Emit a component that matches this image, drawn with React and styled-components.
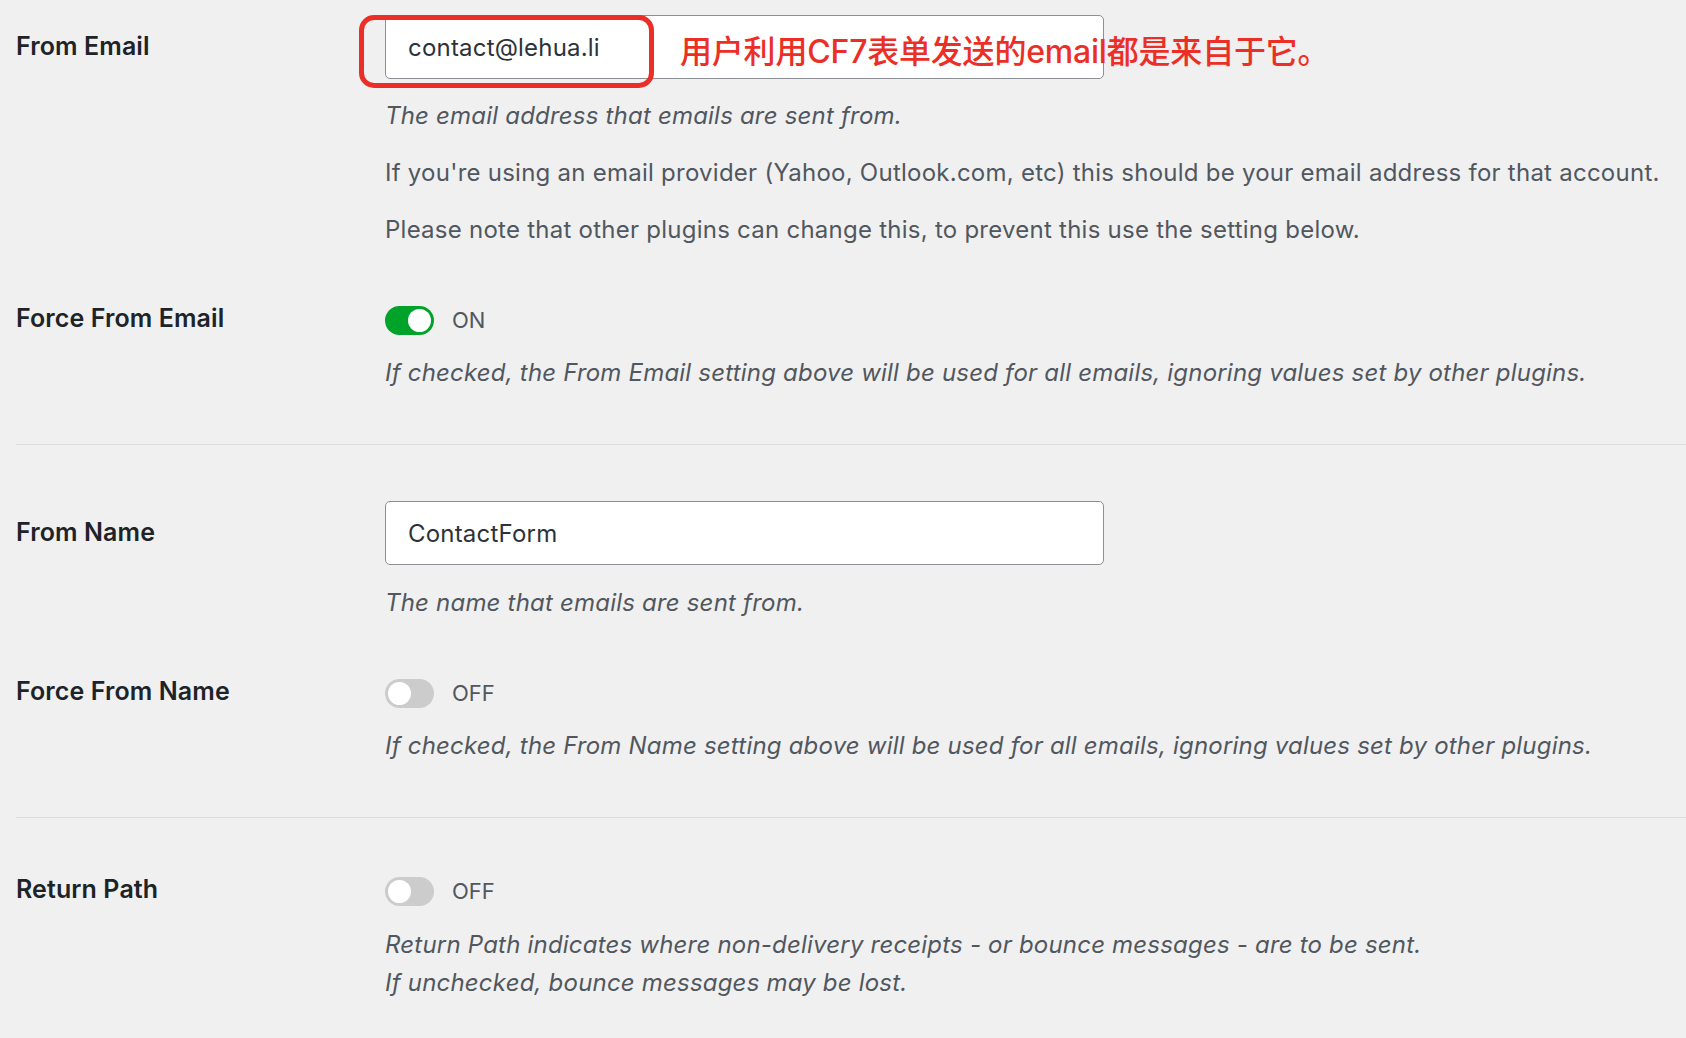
import styled, { createGlobalStyle } from "styled-components";

const GlobalStyle = createGlobalStyle`
  html, body {
    margin: 0;
    padding: 0;
    background: #f0f0f1;
  }
  body {
    font-family: Inter, "Noto Sans", "Noto Sans CJK SC", sans-serif;
    color: #1d2327;
  }
`

const Page = styled.div`
  min-height: 100vh;
  padding-left: 16px;
  background: #f0f0f1;
  overflow: hidden;
`
const Section = styled.section`
  display: flex;
  flex-direction: column;
  gap: 55px;
  padding: ${p => p.$top || 56}px 0 53px;
  border-top: ${p => (p.$first ? "none" : "1px solid #dcdcde")};
`
const Row = styled.div`
  display: grid;
  grid-template-columns: 369px 1fr;
  align-items: start;
`
const Label = styled.div`
  padding-top: ${p => (p.$toggle ? "3px" : "19px")};
  font-size: 25px;
  line-height: 24px;
  font-weight: 600;
  letter-spacing: 0.1px;
  color: #1d2327;
`
const Field = styled.div`
  display: flex;
  flex-direction: column;
  padding-top: ${p => (p.$toggle ? "3px" : "0")};
`
const InputWrap = styled.div`
  position: relative;
  width: 719px;
`
const TextInput = styled.input`
  box-sizing: border-box;
  display: block;
  width: 719px;
  height: 64px;
  padding: 0 22px;
  border: 1px solid #8c8f94;
  border-radius: 5px;
  background: #fff;
  font-family: Inter, "Noto Sans", sans-serif;
  font-size: 24px;
  letter-spacing: 0.2px;
  color: #2c3338;
  outline: none;
`
const Highlight = styled.span`
  position: absolute;
  left: -26px;
  top: 0;
  width: 295px;
  height: 73px;
  box-sizing: border-box;
  border: 5px solid #ec2f26;
  border-radius: 15px;
  pointer-events: none;
`
const Note = styled.span`
  position: absolute;
  left: 295px;
  top: 21px;
  font-family: Inter, "Noto Sans CJK SC", sans-serif;
  font-size: 32px;
  line-height: 32px;
  font-weight: 500;
  letter-spacing: -0.2px;
  color: #ec2f26;
  white-space: nowrap;
`
const Desc = styled.p`
  margin: ${p => p.$gap || 20}px 0 0;
  font-size: 24px;
  line-height: ${p => (p.$lines ? "38px" : "36px")};
  letter-spacing: ${p => (p.$plain ? "0.25px" : "0.2px")};
  font-style: ${p => (p.$plain ? "normal" : "italic")};
  color: #50575e;
  white-space: nowrap;
`
const ToggleLine = styled.div`
  display: flex;
  align-items: center;
  gap: 18px;
  height: 29px;
`
const Track = styled.span`
  box-sizing: border-box;
  display: flex;
  align-items: center;
  justify-content: ${p => (p.$on ? "flex-end" : "flex-start")};
  width: 49px;
  height: 29px;
  padding: 0 3px;
  border-radius: 15px;
  background: ${p => (p.$on ? "#00a32a" : "#cccccc")};
`
const Knob = styled.span`
  width: 23px;
  height: 23px;
  border-radius: 50%;
  background: #fff;
`
const State = styled.span`
  font-size: 22px;
  line-height: 29px;
  color: #50575e;
`

const Toggle = ({ on }) => (
  <ToggleLine>
    <Track $on={on}>
      <Knob />
    </Track>
    <State>{on ? "ON" : "OFF"}</State>
  </ToggleLine>
);

export default function App() {
  return (
    <Page>
      <GlobalStyle />
      <Section $first $top={15}>
        <Row>
          <Label>From Email</Label>
          <Field>
            <InputWrap>
              <TextInput defaultValue="contact@lehua.li" />
              <Highlight />
              <Note>用户利用CF7表单发送的email都是来自于它。</Note>
            </InputWrap>
            <Desc $gap={19}>The email address that emails are sent from.</Desc>
            <Desc $plain $gap={21}>
              If you're using an email provider (Yahoo, Outlook.com, etc) this should be your email address for that account.
            </Desc>
            <Desc $plain $gap={21}>
              Please note that other plugins can change this, to prevent this use the setting below.
            </Desc>
          </Field>
        </Row>
        <Row>
          <Label $toggle>Force From Email</Label>
          <Field $toggle>
            <Toggle on />
            <Desc>
              If checked, the From Email setting above will be used for all emails, ignoring values set by other plugins.
            </Desc>
          </Field>
        </Row>
      </Section>

      <Section>
        <Row>
          <Label>From Name</Label>
          <Field>
            <TextInput defaultValue="ContactForm" />
            <Desc>The name that emails are sent from.</Desc>
          </Field>
        </Row>
        <Row>
          <Label $toggle>Force From Name</Label>
          <Field $toggle>
            <Toggle on={false} />
            <Desc>
              If checked, the From Name setting above will be used for all emails, ignoring values set by other plugins.
            </Desc>
          </Field>
        </Row>
      </Section>

      <Section $top={56}>
        <Row>
          <Label $toggle>Return Path</Label>
          <Field $toggle>
            <Toggle on={false} />
            <Desc $lines $gap={20}>
              Return Path indicates where non-delivery receipts - or bounce messages - are to be sent.
              <br />
              If unchecked, bounce messages may be lost.
            </Desc>
          </Field>
        </Row>
      </Section>
    </Page>
  );
}
